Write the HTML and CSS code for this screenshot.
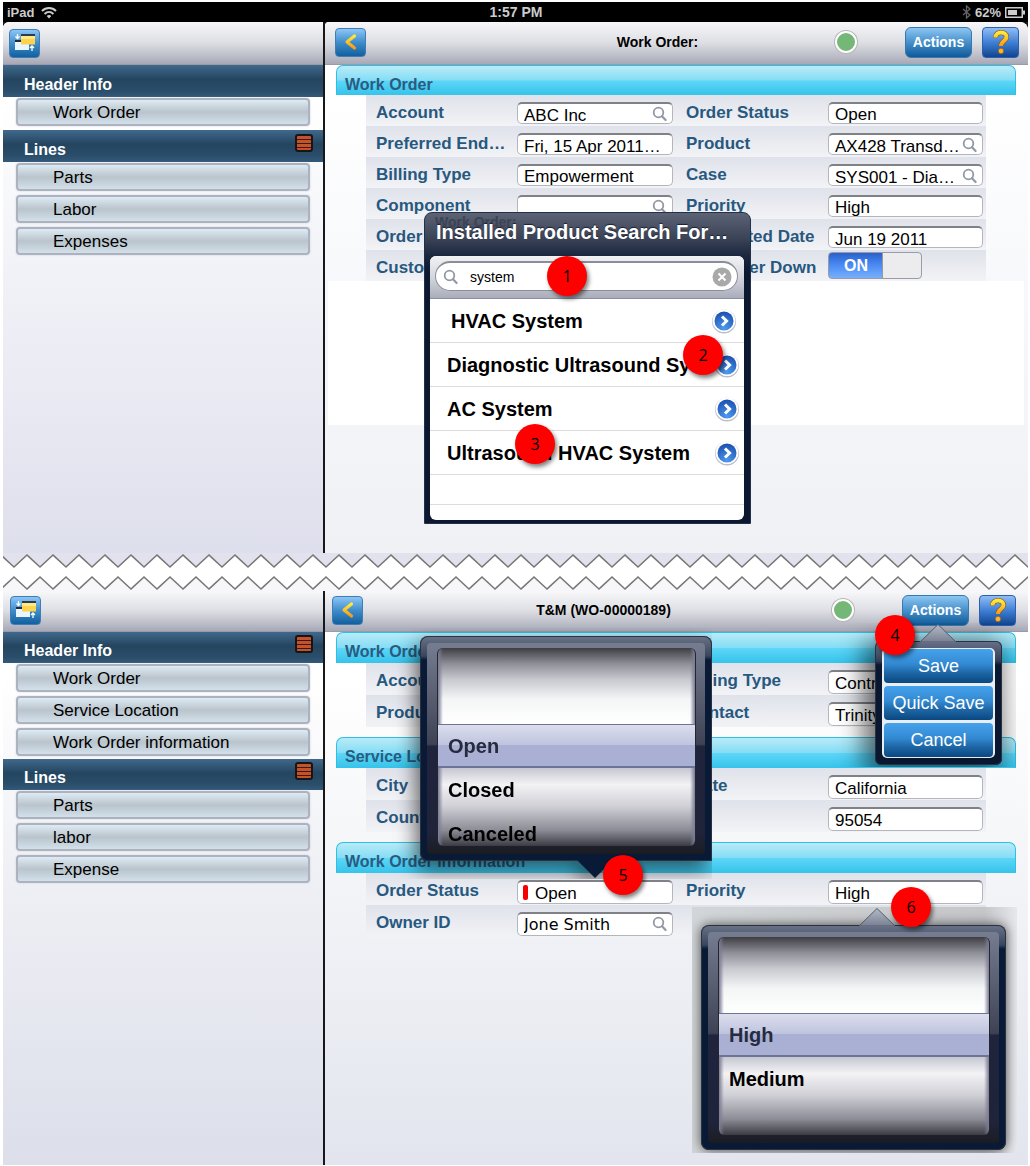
FILE: index.html
```html
<!DOCTYPE html>
<html lang="en">
<head>
<meta charset="utf-8">
<meta name="viewport" content="width=device-width, initial-scale=1">
<title>Work Order</title>
<link rel="stylesheet" href="styles.css">
</head>
<body>
<svg class="defs" aria-hidden="true">
  <defs>
    <linearGradient id="gold" x1="0" y1="0" x2="0" y2="1"><stop offset="0" stop-color="#ffe93a"/><stop offset="1" stop-color="#f79a1b"/></linearGradient>
    <linearGradient id="arrow-fill" x1="0" y1="0" x2="0" y2="1"><stop offset="0" stop-color="#b4bac6"/><stop offset="1" stop-color="#788093"/></linearGradient>
    <radialGradient id="disc" cx=".5" cy=".9" r=".9"><stop offset="0" stop-color="#4d9bf0"/><stop offset="1" stop-color="#1c4fb0"/></radialGradient>
    <symbol id="lens" viewBox="0 0 16 16"><circle cx="6.5" cy="6.5" r="4.8" fill="none" stroke="#9299a6" stroke-width="1.8"/><path d="M10 10.2 13.6 14" stroke="#9299a6" stroke-width="2.2" stroke-linecap="round"/></symbol>
    <symbol id="go" viewBox="0 0 26 26"><circle cx="13" cy="13.5" r="12" fill="#b9bec8"/><circle cx="13" cy="12.7" r="11.4" fill="#fff"/><circle cx="13" cy="13" r="9.5" fill="url(#disc)"/><path d="m11 8.5 4.6 4.5-4.6 4.5" fill="none" stroke="#fff" stroke-width="3"/></symbol>
    <symbol id="windows" viewBox="0 0 22 20"><path d="M1 8h14v9H1z" fill="#e9f5ff"/><path d="M1 7h12v2H1z" fill="#1c2c3c"/><path d="M7 2h14v9.500H7z" fill="#fbd34c"/><path d="M7 1h14v2H7z" fill="#2c3c48"/><path d="M7 3h14v3H7z" fill="#ffe88a"/><path d="M3.500 1v4M1.500 3.500l2 2 2-2M18 18v-5M16 15l2-2 2 2" fill="none" stroke="#fff" stroke-width="1.300"/></symbol>
    <symbol id="back" viewBox="0 0 16 18"><path d="M11.500 3 4 9l7.500 6" fill="none" stroke="url(#gold)" stroke-width="3.200" stroke-linecap="round" stroke-linejoin="round"/></symbol>
    <symbol id="question" viewBox="0 0 20 26"><path d="M4.500 8.500C4.500 1.800 15.500 1.800 15.500 8c0 4-5.500 4.200-5.500 9" fill="none" stroke="#8a4a10" stroke-width="5"/><path d="M4.500 8.500C4.500 1.800 15.500 1.800 15.500 8c0 4-5.500 4.200-5.500 9" fill="none" stroke="url(#gold)" stroke-width="4"/><circle cx="10" cy="22" r="2.700" fill="#ffb52a" stroke="#8a4a10" stroke-width=".5"/></symbol>
    <pattern id="tear" width="26" height="38" patternUnits="userSpaceOnUse">
      <path d="M0 0H26V3L24 2 12 14-1 2 0 0Z" fill="#e2e2ee"/>
      <path d="M-2 2 11 14 24 2 37 14" fill="none" stroke="#777" stroke-width="1.600"/>
      <path d="M-2 36 11 24 24 36 37 24V38H-2Z" fill="#f7f7fa"/>
      <path d="M-2 36 11 24 24 36 37 24" fill="none" stroke="#777" stroke-width="1.600"/>
    </pattern>
  </defs>
</svg>

<div class="page">
  <header class="status">
    <div class="status-left">iPad
      <svg width="16" height="13" viewBox="0 0 16 13" fill="none" stroke="#ccc" stroke-width="2"><path d="M1 5c4-4 10-4 14 0M3.600 8c2.600-2.600 6.200-2.600 8.800 0"/><path d="m5.700 10 2.300 2.500 2.300-2.500c-1.300-1.200-3.300-1.200-4.600 0Z" fill="#ccc" stroke="none"/></svg>
    </div>
    <div class="status-time">1:57 PM</div>
    <div class="status-right">
      <svg width="9" height="14" viewBox="0 0 9 14" fill="none" stroke="#666" stroke-width="1.300"><path d="m1 4 7 6-3.500 3V1L8 4l-7 6"/></svg>
      <span>62%</span>
      <svg width="20" height="11" viewBox="0 0 20 11"><path d="M.75.750h16.500v9.500H.75Z" fill="none" stroke="#ccc" stroke-width="1.500"/><path d="M3 3h9v5H3Z" fill="#ccc"/><path d="M18 3.500h2v4h-2z" fill="#ccc"/></svg>
    </div>
  </header>

  <section class="screen screen-order">
    <nav class="sidebar">
      <div class="toolbar"><button class="icon-button" aria-label="Switch view"><svg width="22" height="20"><use href="#windows"/></svg></button></div>
      <h2 class="nav-heading">Header Info</h2>
      <div class="nav-list"><button>Work Order</button></div>
      <h2 class="nav-heading">Lines <span class="grip"></span></h2>
      <div class="nav-list"><button>Parts</button><button>Labor</button><button>Expenses</button></div>
    </nav>
    <main class="pane">
      <div class="toolbar">
        <button class="icon-button" aria-label="Back"><svg width="16" height="18"><use href="#back"/></svg></button>
        <h1>Work Order:</h1>
        <span class="online"></span>
        <button class="actions-button">Actions</button>
        <button class="help-button" aria-label="Help"><svg width="20" height="26"><use href="#question"/></svg></button>
      </div>
      <section class="group">
        <h2>Work Order</h2>
        <div class="row">
          <label><span>Account</span><span class="box"><input value="ABC Inc"><svg><use href="#lens"/></svg></span></label>
          <label><span>Order Status</span><span class="box"><select><option>Open</option></select></span></label>
        </div>
        <div class="row">
          <label><span>Preferred End…</span><span class="box"><input value="Fri, 15 Apr 2011…"></span></label>
          <label><span>Product</span><span class="box"><input value="AX428 Transd…"><svg><use href="#lens"/></svg></span></label>
        </div>
        <div class="row">
          <label><span>Billing Type</span><span class="box"><select><option>Empowerment</option></select></span></label>
          <label><span>Case</span><span class="box"><input value="SYS001 - Dia…"><svg><use href="#lens"/></svg></span></label>
        </div>
        <div class="row">
          <label><span>Component</span><span class="box"><input value=""><svg><use href="#lens"/></svg></span></label>
          <label><span>Priority</span><span class="box"><select><option>High</option></select></span></label>
        </div>
        <div class="row">
          <label><span>Order</span><span class="box"><input value=""></span></label>
          <label><span>Requested Date</span><span class="box"><input value="Jun 19 2011"></span></label>
        </div>
        <div class="row">
          <label><span>Customer</span><span class="box"><input value=""></span></label>
          <label><span>Customer Down</span><span class="toggle"><input type="checkbox" role="switch" checked><b>ON</b></span></label>
        </div>
      </section>
      <div class="blank"></div>

      <div class="search-popover">
        <span class="ghost-title" aria-hidden="true">Work Order:</span>
        <h2>Installed Product Search For…</h2>
        <div class="search-panel">
          <div class="search-bar">
            <label class="search-field">
              <svg width="16" height="16"><use href="#lens"/></svg>
              <input aria-label="Search" value="system">
              <svg width="20" height="20" viewBox="0 0 20 20"><circle cx="10" cy="10" r="9.500" fill="#a9a9a9"/><path d="m6.500 6.500 7 7m0-7-7 7" stroke="#fff" stroke-width="2"/></svg>
            </label>
          </div>
          <ul class="results">
            <li><a href="#hvac"><span>HVAC System</span><svg><use href="#go"/></svg></a></li>
            <li><a href="#diagnostic"><span>Diagnostic Ultrasound Sy…</span><svg><use href="#go"/></svg></a></li>
            <li><a href="#ac"><span>AC System</span><svg><use href="#go"/></svg></a></li>
            <li><a href="#ultrasound"><span>Ultrasound HVAC System</span><svg><use href="#go"/></svg></a></li>
            <li class="empty"></li>
          </ul>
        </div>
      </div>
      <span class="badge badge-1">1</span>
      <span class="badge badge-2">2</span>
      <span class="badge badge-3">3</span>
    </main>
  </section>

  <svg class="tear" aria-hidden="true"><rect width="100%" height="38" fill="#fff"/><rect width="100%" height="38" fill="url(#tear)"/></svg>

  <section class="screen screen-detail">
    <nav class="sidebar">
      <div class="toolbar"><button class="icon-button" aria-label="Switch view"><svg width="22" height="20"><use href="#windows"/></svg></button></div>
      <h2 class="nav-heading">Header Info <span class="grip"></span></h2>
      <div class="nav-list"><button>Work Order</button><button>Service Location</button><button>Work Order information</button></div>
      <h2 class="nav-heading">Lines <span class="grip"></span></h2>
      <div class="nav-list"><button>Parts</button><button>labor</button><button>Expense</button></div>
    </nav>
    <main class="pane">
      <div class="toolbar">
        <button class="icon-button" aria-label="Back"><svg width="16" height="18"><use href="#back"/></svg></button>
        <h1>T&amp;M (WO-00000189)</h1>
        <span class="online"></span>
        <button class="actions-button">Actions</button>
        <button class="help-button" aria-label="Help"><svg width="20" height="26"><use href="#question"/></svg></button>
      </div>
      <section class="group">
        <h2>Work Order</h2>
        <div class="row">
          <label><span>Account</span><span class="box"><input value=""></span></label>
          <label><span>Billing Type</span><span class="box"><select><option>Contract</option></select></span></label>
        </div>
        <div class="row">
          <label><span>Product</span><span class="box"><input value=""></span></label>
          <label><span>Contact</span><span class="box"><input value="Trinity"></span></label>
        </div>
      </section>
      <section class="group">
        <h2>Service Location</h2>
        <div class="row">
          <label><span>City</span><span class="box"><input value=""></span></label>
          <label><span>State</span><span class="box"><input value="California"></span></label>
        </div>
        <div class="row">
          <label><span>Country</span><span class="box"><input value=""></span></label>
          <label><span>Zip</span><span class="box"><input value="95054"></span></label>
        </div>
      </section>
      <section class="group">
        <h2>Work Order Information</h2>
        <div class="row">
          <label><span>Order Status</span><span class="box required"><select><option>Open</option></select></span></label>
          <label><span>Priority</span><span class="box"><select><option>High</option></select></span></label>
        </div>
        <div class="row">
          <label><span>Owner ID</span><span class="box owner"><input value="Jone Smith"><svg><use href="#lens"/></svg></span></label>
        </div>
      </section>

      <div class="picker picker-status">
        <ul class="wheel" role="listbox" aria-label="Order Status">
          <li role="option" aria-selected="true">Open</li>
          <li role="option">Closed</li>
          <li role="option">Canceled</li>
        </ul>
        <svg class="arrow-down" viewBox="0 0 36 18"><path d="M0 0H36L18 18Z" fill="#081a36"/></svg>
      </div>

      <div class="picker-backdrop">
        <div class="picker picker-priority">
          <svg class="arrow-up" viewBox="0 0 36 18"><path d="M0 18 18 .500 36 18Z" fill="url(#arrow-fill)" stroke="#555c69"/></svg>
          <ul class="wheel" role="listbox" aria-label="Priority">
            <li role="option" aria-selected="true">High</li>
            <li role="option">Medium</li>
          </ul>
        </div>
      </div>

      <div class="menu-popover">
        <svg class="arrow-up" viewBox="0 0 36 18"><path d="M0 18 18 .500 36 18Z" fill="url(#arrow-fill)" stroke="#555c69"/></svg>
        <div class="menu">
          <button>Save</button>
          <button>Quick Save</button>
          <button>Cancel</button>
        </div>
      </div>
      <span class="badge badge-4">4</span>
      <span class="badge badge-5">5</span>
      <span class="badge badge-6">6</span>
    </main>
  </section>
</div>
</body>
</html>
```
FILE: styles.css
```css
* { box-sizing: border-box; }
body { margin: 0; background: #fff; font-family: "Liberation Sans", Arial, sans-serif; color: #000; }
h1, h2, ul { margin: 0; padding: 0; }
ul { list-style: none; }
button, input, select { font: inherit; margin: 0; }
button { padding: 0; border: 0; }
svg { flex: none; }
.defs { position: absolute; width: 0; height: 0; }
.page { padding: 2px 2px 1px 3px; }

/* Device status bar */
.status { display: grid; grid-template-columns: 1fr auto 1fr; align-items: center; height: 20px; padding: 0 3px 0 4px; background: #000; color: #ccc; font-size: 13px; font-weight: bold; }
.status-left, .status-right { display: flex; align-items: center; gap: 7px; }
.status-right { justify-content: flex-end; gap: 4px; }
.status-time { font-size: 14px; }

/* Screens */
.screen { display: grid; grid-template-columns: 320fr 703fr; gap: 2px; background: #16181c; }
.screen-order { min-height: 531px; }
.screen-detail { min-height: 574px; }
.sidebar { background: linear-gradient(#fff 15%, #f4f5f9 40%, #dedfec); }
.pane { position: relative; background: linear-gradient(#fff 15%, #f7f8fb 50%, #f0f1f5); }
.screen-order .sidebar { border-top-left-radius: 6px; }
.screen-order .pane { border-radius: 4px 8px 0 0; }
.screen-detail .sidebar { background: linear-gradient(#fff 15%, #eff0f5 50%, #dcdeea); }
.screen-detail .pane { background: linear-gradient(#fff 15%, #f1f2f6 58%, #e2e5ee); }
.tear { display: block; width: 100%; height: 38px; }

.toolbar { display: flex; align-items: center; height: 43px; background: linear-gradient(#f8f8fa, #dddee3 50%, #a7a9b7); border-bottom: 1px solid #9a9ba8; border-radius: inherit; }
.screen-order .sidebar .toolbar { padding-left: 6px; }
.screen-order .pane .toolbar { padding: 0 9px 2px 10px; }
.screen-detail .toolbar { height: 41px; padding: 0 12px 2px 7px; }
.toolbar h1 { flex: 1; padding-left: 12px; font-size: 14px; line-height: 20px; text-align: center; }
.screen-order h1 { padding-left: 114px; }
.icon-button { display: grid; place-items: center; width: 31px; height: 29px; border: 1px solid #3f7db4; border-radius: 4px; background: linear-gradient(#8cc6f7, #3f8cca 50%, #12609f); }
.online { width: 22px; height: 22px; margin-right: 48px; border: 2px solid #fff; border-radius: 50%; background: #75b777; box-shadow: 0 0 0 1px #b6b6ba; }
.actions-button { width: 67px; height: 31px; margin-right: 10px; border: 1px solid #3779ac; border-radius: 6px; background: linear-gradient(#8cc6f3, #468fca 50%, #0f5a99); color: #fff; font-size: 14px; font-weight: bold; line-height: 20px; }
.help-button { display: grid; place-items: center; width: 37px; height: 31px; border: 1px solid #2d5fae; border-radius: 4px; background: linear-gradient(#8fbdf5, #3f7fd4 50%, #10458f); }

/* Sidebar navigation */
.nav-heading { display: flex; align-items: flex-start; justify-content: space-between; height: 32px; padding: 10px 10px 0 21px; background: linear-gradient(#41698c, #234560 45%, #2a4d69 80%, #33597a); color: #fff; font-size: 16px; line-height: 20px; }
.grip { width: 18px; height: 18px; margin-top: -6px; border: 2px solid #161616; border-radius: 3px; background: repeating-linear-gradient(#c4532c 0 3px, #3a1a12 3px 4px); }
.nav-list { display: flex; flex-direction: column; gap: 4px; padding: 1px 13px 4px; }
.screen-detail .nav-heading { height: 31px; padding-top: 9px; }
.screen-detail .nav-list { padding-bottom: 3px; }
.nav-list button { height: 28px; padding: 2px 0 0 35px; border: 2px solid #adb2c1; border-radius: 4px; background: linear-gradient(#dfebf4, #b9c4cc 50%, #d3e0ea); font-size: 17px; line-height: 20px; text-align: left; box-shadow: 0 0 2px #c9ccd6; }

/* Form groups */
.group { padding: 0 12px 0 11px; }
.group + .group { padding-top: 10px; }
.group h2 { height: 31px; padding: 9px 0 0 8px; border: 1px solid #2cc0e4; border-bottom: 0; border-radius: 7px 7px 0 0; background: linear-gradient(#b9ebf8, #84ddf5 49%, #5dd6f8 51%, #36c3ea); color: #2b5b80; font-size: 16px; line-height: 20px; }
.row { display: grid; grid-template-columns: 307fr 310fr; height: 31px; margin: 0 30px; padding-right: 3px; background: linear-gradient(#dfe2ea, #f2f3f6); }
.row label { display: grid; grid-template-columns: 151fr 156fr; align-items: start; padding-top: 7px; }
.row label + label { grid-template-columns: 155fr 155fr; }
.row label > span:first-child { padding: 1px 0 0 10px; color: #27587f; font-size: 17px; font-weight: bold; line-height: 20px; white-space: nowrap; }
.row label + label > span:first-child { padding-left: 13px; }
.screen-order .group h2 { height: 30px; }
.screen-detail .row { height: 32px; }
.box { position: relative; display: block; }
.box input, .box select { display: block; appearance: none; width: 100%; height: 22px; padding: 4px 0 0 6px; border: 1px solid #b4b6bc; border-top: 2px solid #7f8187; border-radius: 5px; outline: 0; background: #fff; color: #000; font-size: 17px; line-height: 20px; }
.box select { padding-top: 1px; }
.screen-detail .box input { height: 24px; padding-top: 3px; }
.screen-detail .box select { height: 24px; padding-top: 2px; }
.box svg { position: absolute; top: 4px; right: 5px; width: 16px; height: 16px; }
.box.required::before { content: ""; position: absolute; top: 5px; left: 6px; width: 5px; height: 15px; border-radius: 2px; background: #f80000; }
.screen-detail .required select { padding-left: 17px; }
.screen-detail .owner input { padding-top: 0; font-family: "DejaVu Sans", Verdana, sans-serif; font-size: 16px; }
.toggle { position: relative; display: block; width: 94px; height: 27px; margin-top: -5px; }
.toggle input { appearance: none; display: block; width: 94px; height: 27px; margin: 0; border: 1px solid #9a9ca4; border-radius: 4px; background: linear-gradient(90deg, transparent 53px, #999 53px 54px, transparent 54px), linear-gradient(90deg, transparent 53px, #ececee 53px), linear-gradient(#2a60cc, #4b8cf4 50%, #78affc); }
.toggle b { position: absolute; top: 4px; left: 16px; color: #fff; font-size: 16px; line-height: 20px; }
.blank { height: 144px; margin: 0 4px 0 3px; background: #fff; }

/* Product search popover */
.search-popover { position: absolute; top: 190px; left: 99px; width: 327px; padding: 0 6px 3px 5px; border: 1px solid #22304a; border-radius: 8px 8px 0 0; background: linear-gradient(#5c6375, #3a4256 26px, #1c2840 42px, #0c1730 60px); }
.search-popover h2 { position: relative; height: 43px; padding: 8px 0 0 6px; color: #fff; font-size: 20px; line-height: 22px; white-space: nowrap; text-shadow: 0 -1px 1px #1a2030; }
.ghost-title { position: absolute; top: 0; left: 10px; color: #3c4354; font-size: 14px; font-weight: bold; line-height: 18px; }
.search-panel { overflow: hidden; border-radius: 6px; background: #fff; }
.search-bar { height: 43px; padding: 5px 6px 0 5px; border-bottom: 1px solid #8b8f9b; background: linear-gradient(#f2f2f5, #d5d7de 50%, #a9acba); }
.search-field { display: flex; align-items: center; gap: 11px; height: 30px; padding: 0 5px 0 7px; border: 1px solid #8b8e98; border-top-width: 2px; border-radius: 15px; background: #fff; }
.search-field input { flex: 1; min-width: 0; padding: 0; border: 0; outline: 0; background: none; font-size: 14px; line-height: 20px; }
.results li { height: 44px; border-bottom: 1px solid #dcdcde; }
.results a { display: flex; align-items: center; justify-content: space-between; height: 43px; padding: 0 4px 0 17px; color: #000; font-size: 20px; font-weight: bold; line-height: 24px; text-decoration: none; white-space: nowrap; }
.results li:first-child a { padding: 0 7px 0 21px; }
.results a svg { width: 26px; height: 26px; }
.results .empty { height: 30px; }
.search-panel::after { content: ""; display: block; height: 15px; }

/* Wheel pickers */
.picker { position: relative; height: 225px; padding: 12px 16px 15px 17px; border-radius: 8px; background: linear-gradient(#6a7387, #38465f 20px, #081a36 24px, #081a36); box-shadow: 0 0 0 1px #2b3140 inset; }
.picker::before { content: ""; position: absolute; inset: 7px; border-radius: 4px; background: linear-gradient(#767d90, #3e4254 48%, #1f233c 49%, #20243a 90%, #1b1c22); }
.wheel { position: relative; height: 198px; padding-top: 76px; overflow: hidden; border: 1px solid #23252f; border-width: 0 1px; border-radius: 6px; background: linear-gradient(90deg, #7c7c96, transparent 5px calc(100% - 5px), #7c7c96), linear-gradient(#3d3d42, #8f8f98 8%, #c9c9d0 16%, #f4f6f6 26%, #fff 38%, #fff 59%, #c3c3cf 60%, #f3f3f5 69%, #cfcfd6 80%, #8c8c96 92%, #3b3b44); }
.wheel li { height: 44px; padding: 0 10px; font-size: 20px; font-weight: bold; line-height: 44px; }
.wheel li[aria-selected] { border: 1px solid #6b7596; border-width: 1px 0 2px; background: linear-gradient(#dcdeed, #bfc4df 48%, #a9b0d4 50%, #a9b0d4); color: #262b3e; line-height: 42px; }
.picker-status { position: absolute; top: 45px; left: 95px; width: 292px; border-bottom-right-radius: 0; filter: drop-shadow(-4px 8px 10px rgba(0, 0, 0, .6)); clip-path: inset(-8px 0 -18px -40px); }
.arrow-down { position: absolute; top: 224px; left: 157px; width: 36px; height: 18px; }
.arrow-up { position: absolute; top: -17px; width: 36px; height: 18px; }
.picker-backdrop { position: absolute; top: 316px; left: 367px; width: 325px; padding: 18px 11px 3px 9px; overflow: hidden; background: linear-gradient(90deg, #d3d6d8, #c4c6c8 90%, #e6e8ec); }
.picker-priority { box-shadow: 0 0 0 1px #2b3140 inset, 0 0 12px rgba(0, 0, 0, .65); }
.picker-priority .arrow-up { left: 158px; }

/* Actions menu */
.menu-popover { position: absolute; top: 50px; left: 550px; width: 127px; padding: 7px; border-radius: 6px; background: linear-gradient(#69728a, #333d55 20px, #0a1730 24px); box-shadow: 0 0 0 1px #2b3140 inset, -6px 6px 24px 6px rgba(0, 0, 0, .55); clip-path: inset(-18px -14px -2px -50px); }
.menu-popover .arrow-up { left: 45px; }
.menu { display: flex; flex-direction: column; gap: 3px; padding: 1px 2px; border-radius: 5px; background: #e9eef4; }
.menu button { height: 34px; border-radius: 4px; background: linear-gradient(#46a2ec, #3289d2 45%, #1d66a5 70%, #0a4780); color: #fff; font-size: 18px; line-height: 24px; }

/* Callout numbers */
.badge { position: absolute; width: 40px; height: 40px; border-radius: 50%; background: #fe0000; font: 16px/40px "Open Sans", sans-serif; text-align: center; box-shadow: 2px 3px 4px rgba(0, 0, 0, .5); }
.badge-1 { top: 234px; left: 222px; }
.badge-2 { top: 313px; left: 358px; }
.badge-3 { top: 402px; left: 190px; }
.badge-4 { top: 24px; left: 550px; }
.badge-5 { top: 264px; left: 278px; }
.badge-6 { top: 296px; left: 566px; }
```
